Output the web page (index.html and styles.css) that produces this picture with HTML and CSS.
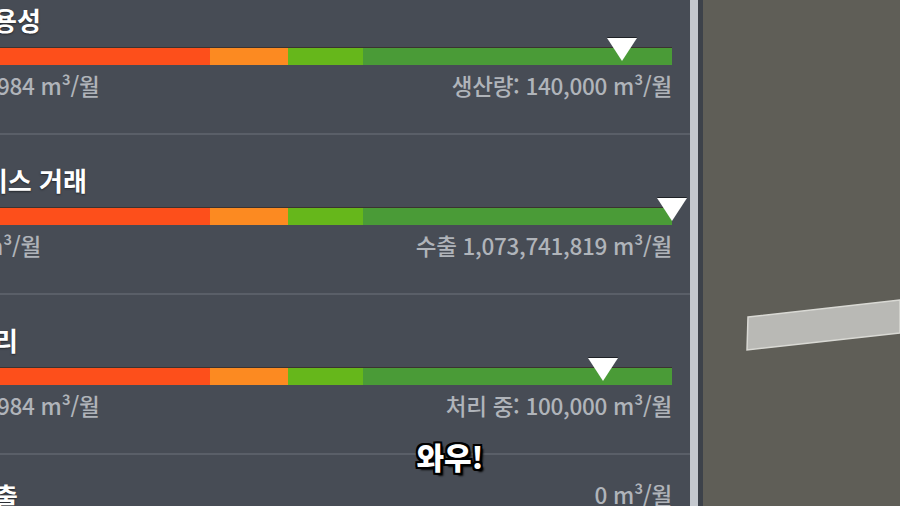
FILE: index.html
```html
<!DOCTYPE html>
<html lang="ko">
<head>
    <meta charset="UTF-8">
    <title>상하수도 정보</title>
    <link rel="stylesheet" href="styles.css">
</head>
<body>
    <div class="screen">
        <!-- Info panel, scrolled a little -->
        <div class="panel">
            <div class="panel-list">
                <div class="row">
                    <div class="title cut-title-1">용성</div>
                    <div class="bar">
                        <span class="seg seg-red"></span>
                        <span class="seg seg-orange"></span>
                        <span class="seg seg-lime"></span>
                        <span class="seg seg-green"></span>
                        <span class="marker" style="left: 622px"></span>
                    </div>
                    <div class="labels">
                        <span class="cut-num">1,984 m³/월</span>
                        <span>생산량: 140,000 m³/월</span>
                    </div>
                </div>

                <div class="row">
                    <div class="title cut-title-2">서비스 거래</div>
                    <div class="bar">
                        <span class="seg seg-red"></span>
                        <span class="seg seg-orange"></span>
                        <span class="seg seg-lime"></span>
                        <span class="seg seg-green"></span>
                        <span class="marker" style="left: 672px"></span>
                    </div>
                    <div class="labels">
                        <span class="cut-unit">m³/월</span>
                        <span>수출 1,073,741,819 m³/월</span>
                    </div>
                </div>

                <div class="row">
                    <div class="title cut-title-3">리</div>
                    <div class="bar">
                        <span class="seg seg-red"></span>
                        <span class="seg seg-orange"></span>
                        <span class="seg seg-lime"></span>
                        <span class="seg seg-green"></span>
                        <span class="marker" style="left: 603px"></span>
                    </div>
                    <div class="labels">
                        <span class="cut-num">1,984 m³/월</span>
                        <span>처리 중: 100,000 m³/월</span>
                    </div>
                </div>

                <div class="row row-last">
                    <div class="labels labels-top">
                        <span class="title cut-title-3">출</span>
                        <span>0 m³/월</span>
                    </div>
                </div>
            </div>
        </div>

        <!-- Scrollbar -->
        <div class="scrollbar"><div class="thumb"></div></div>

        <!-- Map view -->
        <div class="map">
            <svg width="197" height="506" viewBox="0 0 197 506">
                <polygon points="45,317 197,300 197,333 44,350" fill="#b9b9b5" stroke="#d9d9d4" stroke-width="1.5"/>
            </svg>
        </div>

        <div class="subtitle">와우!</div>
    </div>
</body>
</html>
```

FILE: styles.css
```css
body {
    margin: 0;
    background: #5f5e57;
    font-family: "Noto Sans CJK KR", "Noto Sans", sans-serif;
}
.screen {
    position: relative;
    width: 900px;
    height: 506px;
    overflow: hidden;
    display: flex;
}
.panel {
    width: 690px;
    height: 506px;
    background: #474c55;
    overflow: hidden;
}
.panel-list {
    margin-top: -27px;
}
.row {
    height: 160px;
    border-top: 2px solid #5a5f68;
    padding: 30px 18px 0 0;
    box-sizing: border-box;
}
.title {
    display: block;
    font-size: 26px;
    line-height: 30px;
    font-weight: 700;
    color: #ffffff;
    white-space: nowrap;
    text-shadow: 0 1px 2px rgba(0, 0, 0, 0.5);
}
.cut-title-1 {
    margin-left: -7px;
}
.cut-title-2 {
    margin-left: -40px;
}
.cut-title-3 {
    margin-left: -6px;
}
.bar {
    position: relative;
    display: flex;
    height: 17px;
    margin-top: 13px;
    box-shadow: 0 -1px 0 #3b3330;
}
.seg {
    display: block;
    height: 100%;
}
.seg-red {
    width: 210px;
    background: #fd4f1b;
}
.seg-orange {
    width: 78px;
    background: #fc8a21;
}
.seg-lime {
    width: 75px;
    background: #66b71b;
}
.seg-green {
    flex: 1;
    background: #4a9b37;
}
.marker {
    position: absolute;
    top: -10px;
    width: 0;
    height: 0;
    margin-left: -15px;
    border-left: 15px solid transparent;
    border-right: 15px solid transparent;
    border-top: 23px solid #ffffff;
    filter: drop-shadow(0 -1px 0 #1e2126);
}
.labels {
    display: flex;
    justify-content: space-between;
    align-items: center;
    margin-top: 7px;
    font-size: 22.5px;
    font-weight: 500;
    letter-spacing: -0.3px;
    line-height: 26px;
    color: #b0b4ba;
    white-space: nowrap;
}
.cut-num {
    margin-left: -22px;
}
.cut-unit {
    margin-left: -18px;
}
.labels-top {
    margin-top: -8px;
}
.labels-top .title {
    margin-top: 4px;
}
.scrollbar {
    width: 13px;
    height: 506px;
    background: #3d424a;
}
.thumb {
    width: 8px;
    height: 100%;
    background: #c4c8ce;
}
.map {
    flex: 1;
    height: 506px;
    background: #5f5e57;
}
.map svg {
    display: block;
}
.subtitle {
    position: absolute;
    left: 450px;
    top: 434px;
    transform: translateX(-50%);
    font-size: 30px;
    font-weight: 900;
    color: #ffffff;
    text-shadow: -2px -2px 0 #000, 2px -2px 0 #000, -2px 2px 0 #000, 2px 2px 0 #000,
        0 -2px 0 #000, 0 2px 0 #000, -2px 0 0 #000, 2px 0 0 #000, 3px 3px 2px #000;
}
```
